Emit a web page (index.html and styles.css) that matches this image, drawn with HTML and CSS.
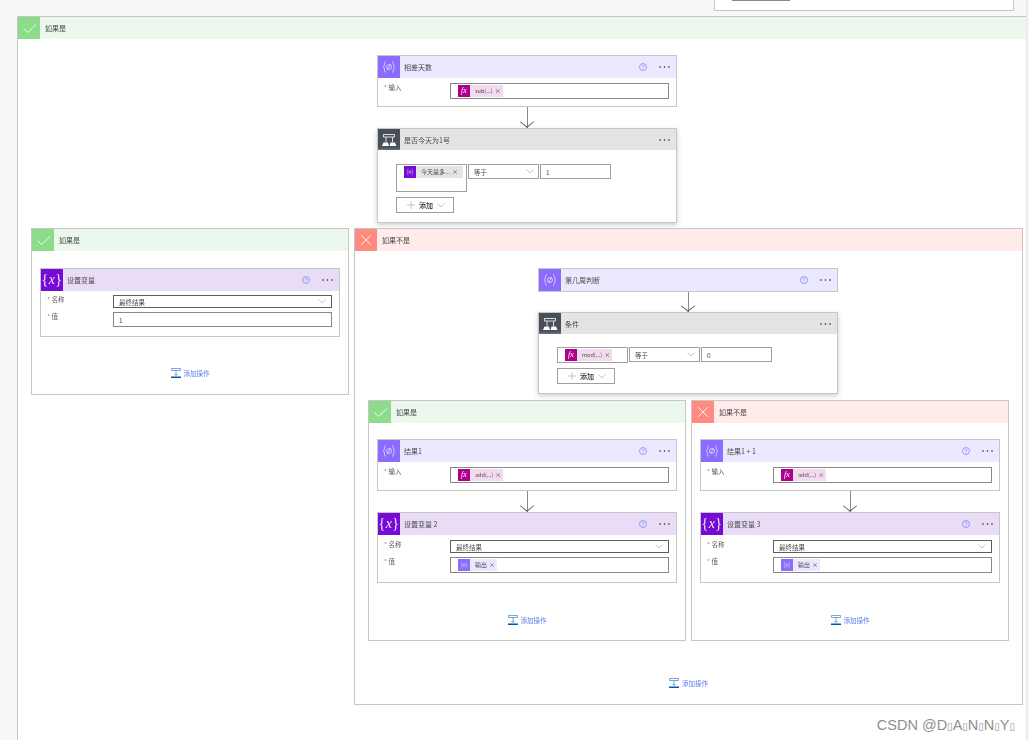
FILE: index.html
```html
<html lang="zh-CN">
<head>
    <meta charset="UTF-8">
    <title>Flow designer</title>
    <link rel="stylesheet" href="styles.css">
</head>
<body>
    <svg class="defs" width="0" height="0">
        <symbol id="i-check" viewBox="0 0 22 22"><path d="M5.500 11.500l4 4 8.500-8" fill="none" stroke="#fff" stroke-width="0.800"/></symbol>
        <symbol id="i-cross" viewBox="0 0 22 22"><path d="M6 6l10 10M16 6L6 16" fill="none" stroke="#fff" stroke-width="0.800"/></symbol>
        <symbol id="i-compose" viewBox="0 0 22 22"><g fill="none" stroke="#fff" stroke-width="0.600"><path d="M8 5.500c-2 0-1 4-2.500 5.500 1.500 1.500.5 5.500 2.500 5.500M14 5.500c2 0 1 4 2.500 5.500-1.500 1.500-.5 5.500-2.500 5.500"/><circle cx="11" cy="11" r="2.500"/><path d="M9.500 13.500l3-5"/></g></symbol>
        <symbol id="i-control" viewBox="0 0 22 22"><path d="M5.500 5.500h11v2.500h-11zM8 8v5M14.500 8v5" fill="none" stroke="#fff" stroke-width="0.800"/><path d="M4 17l1.500-3.500h4.500l1 3.500zM11.500 17l1-3.500h4.500l1.500 3.500z" fill="#fff"/></symbol>
        <symbol id="i-add" viewBox="0 0 10 10"><path d="M.5.500h9v2h-9zM5 2.500v5M3.500 6L5 7.500 6.500 6" fill="none" stroke="#5b8fc7" stroke-width="0.800"/><path d="M0 8.500h10V10H0z" fill="#0058a8"/></symbol>
        <symbol id="i-help" viewBox="0 0 8 8"><circle cx="4" cy="4" r="3.500" fill="none" stroke="#7f8ff0" stroke-width="0.800"/><path d="M3 3.200c0-1.300 2-1.300 2 0 0 .8-1 .8-1 1.600M4 5.600v.8" fill="none" stroke="#7f8ff0" stroke-width="0.700"/></symbol>
        <symbol id="i-dots" viewBox="0 0 11 2"><circle cx="1" cy="1" r="0.800" fill="#201f1e"/><circle cx="5.500" cy="1" r="0.800" fill="#201f1e"/><circle cx="10" cy="1" r="0.800" fill="#201f1e"/></symbol>
        <symbol id="i-chevron" viewBox="0 0 8 5"><path d="M.5.500L4 4 7.500.500" fill="none" stroke="#a19f9d" stroke-width="0.600"/></symbol>
        <symbol id="i-plus" viewBox="0 0 8 8"><path d="M4 0v8M0 4h8" fill="none" stroke="#9fbcd6" stroke-width="0.800"/></symbol>
    </svg>

    <div class="page">
        <div class="top-stub"><div class="stub-line"></div></div>

        <!-- Outer condition, yes branch -->
        <section class="scope scope-outer">
            <div class="scope-head head-yes">
                <span class="scope-icon icon-yes"><svg><use href="#i-check"/></svg></span>
                <span class="scope-title">如果是</span>
            </div>
            <div class="scope-body">
                <div class="stack stack-top">
                    <div class="card">
                        <div class="card-head head-compose">
                            <span class="card-icon icon-compose"><svg><use href="#i-compose"/></svg></span>
                            <span class="card-title">相差天数</span>
                            <svg class="help"><use href="#i-help"/></svg>
                            <svg class="dots"><use href="#i-dots"/></svg>
                        </div>
                        <div class="card-body">
                            <div class="field">
                                <label class="field-label"><b>*</b> 输入</label>
                                <div class="input"><span class="token token-fx"><i class="token-icon icon-fx">fx</i>sub(...)<em>×</em></span></div>
                            </div>
                        </div>
                    </div>
                    <div class="arrow"></div>
                    <div class="card card-control">
                        <div class="card-head head-control">
                            <span class="card-icon icon-control"><svg><use href="#i-control"/></svg></span>
                            <span class="card-title">是否今天为1号</span>
                            <svg class="dots"><use href="#i-dots"/></svg>
                        </div>
                        <div class="control-body">
                            <div class="rule">
                                <div class="rule-box rule-box-tall"><span class="token token-var"><i class="token-icon icon-var"><svg><use href="#i-compose"/></svg></i>今天是多...<em>×</em></span></div>
                                <div class="rule-box rule-select">等于<svg class="chevron"><use href="#i-chevron"/></svg></div>
                                <div class="rule-box">1</div>
                            </div>
                            <div class="add-btn"><svg class="plus"><use href="#i-plus"/></svg>添加<svg class="chevron"><use href="#i-chevron"/></svg></div>
                        </div>
                    </div>
                </div>

                <div class="branches">
                    <!-- Left branch -->
                    <section class="scope scope-side">
                        <div class="scope-head head-yes">
                            <span class="scope-icon icon-yes"><svg><use href="#i-check"/></svg></span>
                            <span class="scope-title">如果是</span>
                        </div>
                        <div class="stack stack-branch">
                            <div class="card">
                                <div class="card-head head-var">
                                    <span class="card-icon icon-var var-mark">{<i>x</i>}</span>
                                    <span class="card-title">设置变量</span>
                                    <svg class="help"><use href="#i-help"/></svg>
                                    <svg class="dots"><use href="#i-dots"/></svg>
                                </div>
                                <div class="card-body card-body-var">
                                    <div class="field">
                                        <label class="field-label"><b>*</b> 名称</label>
                                        <div class="select">最终结果<svg class="chevron"><use href="#i-chevron"/></svg></div>
                                    </div>
                                    <div class="field">
                                        <label class="field-label"><b>*</b> 值</label>
                                        <div class="input input-plain">1</div>
                                    </div>
                                </div>
                            </div>
                            <div class="add-action"><svg><use href="#i-add"/></svg>添加操作</div>
                        </div>
                    </section>

                    <!-- Right branch -->
                    <section class="scope scope-wide">
                        <div class="scope-head head-no">
                            <span class="scope-icon icon-no"><svg><use href="#i-cross"/></svg></span>
                            <span class="scope-title">如果不是</span>
                        </div>
                        <div class="stack stack-branch stack-wide">
                            <div class="card">
                                <div class="card-head head-compose">
                                    <span class="card-icon icon-compose"><svg><use href="#i-compose"/></svg></span>
                                    <span class="card-title">第几周判断</span>
                                    <svg class="help"><use href="#i-help"/></svg>
                                    <svg class="dots"><use href="#i-dots"/></svg>
                                </div>
                            </div>
                            <div class="arrow"></div>
                            <div class="card card-control">
                                <div class="card-head head-control">
                                    <span class="card-icon icon-control"><svg><use href="#i-control"/></svg></span>
                                    <span class="card-title">条件</span>
                                    <svg class="dots"><use href="#i-dots"/></svg>
                                </div>
                                <div class="control-body control-body-short">
                                    <div class="rule">
                                        <div class="rule-box"><span class="token token-fx"><i class="token-icon icon-fx">fx</i>mod(...)<em>×</em></span></div>
                                        <div class="rule-box rule-select">等于<svg class="chevron"><use href="#i-chevron"/></svg></div>
                                        <div class="rule-box">0</div>
                                    </div>
                                    <div class="add-btn"><svg class="plus"><use href="#i-plus"/></svg>添加<svg class="chevron"><use href="#i-chevron"/></svg></div>
                                </div>
                            </div>
                        </div>

                        <div class="sub-branches">
                            <section class="scope scope-side">
                                <div class="scope-head head-yes">
                                    <span class="scope-icon icon-yes"><svg><use href="#i-check"/></svg></span>
                                    <span class="scope-title">如果是</span>
                                </div>
                                <div class="stack stack-sub">
                                    <div class="card">
                                        <div class="card-head head-compose">
                                            <span class="card-icon icon-compose"><svg><use href="#i-compose"/></svg></span>
                                            <span class="card-title">结果1</span>
                                            <svg class="help"><use href="#i-help"/></svg>
                                            <svg class="dots"><use href="#i-dots"/></svg>
                                        </div>
                                        <div class="card-body">
                                            <div class="field">
                                                <label class="field-label"><b>*</b> 输入</label>
                                                <div class="input"><span class="token token-fx"><i class="token-icon icon-fx">fx</i>add(...)<em>×</em></span></div>
                                            </div>
                                        </div>
                                    </div>
                                    <div class="arrow"></div>
                                    <div class="card">
                                        <div class="card-head head-var">
                                            <span class="card-icon icon-var var-mark">{<i>x</i>}</span>
                                            <span class="card-title">设置变量 2</span>
                                            <svg class="help"><use href="#i-help"/></svg>
                                            <svg class="dots"><use href="#i-dots"/></svg>
                                        </div>
                                        <div class="card-body card-body-var">
                                            <div class="field">
                                                <label class="field-label"><b>*</b> 名称</label>
                                                <div class="select">最终结果<svg class="chevron"><use href="#i-chevron"/></svg></div>
                                            </div>
                                            <div class="field">
                                                <label class="field-label"><b>*</b> 值</label>
                                                <div class="input"><span class="token token-compose"><i class="token-icon icon-compose"><svg><use href="#i-compose"/></svg></i>输出<em>×</em></span></div>
                                            </div>
                                        </div>
                                    </div>
                                    <div class="add-action"><svg><use href="#i-add"/></svg>添加操作</div>
                                </div>
                            </section>

                            <section class="scope scope-side">
                                <div class="scope-head head-no">
                                    <span class="scope-icon icon-no"><svg><use href="#i-cross"/></svg></span>
                                    <span class="scope-title">如果不是</span>
                                </div>
                                <div class="stack stack-sub">
                                    <div class="card">
                                        <div class="card-head head-compose">
                                            <span class="card-icon icon-compose"><svg><use href="#i-compose"/></svg></span>
                                            <span class="card-title">结果1 + 1</span>
                                            <svg class="help"><use href="#i-help"/></svg>
                                            <svg class="dots"><use href="#i-dots"/></svg>
                                        </div>
                                        <div class="card-body">
                                            <div class="field">
                                                <label class="field-label"><b>*</b> 输入</label>
                                                <div class="input"><span class="token token-fx"><i class="token-icon icon-fx">fx</i>add(...)<em>×</em></span></div>
                                            </div>
                                        </div>
                                    </div>
                                    <div class="arrow"></div>
                                    <div class="card">
                                        <div class="card-head head-var">
                                            <span class="card-icon icon-var var-mark">{<i>x</i>}</span>
                                            <span class="card-title">设置变量 3</span>
                                            <svg class="help"><use href="#i-help"/></svg>
                                            <svg class="dots"><use href="#i-dots"/></svg>
                                        </div>
                                        <div class="card-body card-body-var">
                                            <div class="field">
                                                <label class="field-label"><b>*</b> 名称</label>
                                                <div class="select">最终结果<svg class="chevron"><use href="#i-chevron"/></svg></div>
                                            </div>
                                            <div class="field">
                                                <label class="field-label"><b>*</b> 值</label>
                                                <div class="input"><span class="token token-compose"><i class="token-icon icon-compose"><svg><use href="#i-compose"/></svg></i>输出<em>×</em></span></div>
                                            </div>
                                        </div>
                                    </div>
                                    <div class="add-action"><svg><use href="#i-add"/></svg>添加操作</div>
                                </div>
                            </section>
                        </div>

                        <div class="add-action add-action-wide"><svg><use href="#i-add"/></svg>添加操作</div>
                    </section>
                </div>
            </div>
        </section>
    </div>

    <div class="watermark">CSDN @D<span class="tofu">▯</span>A<span class="tofu">▯</span>N<span class="tofu">▯</span>N<span class="tofu">▯</span>Y<span class="tofu">▯</span></div>
</body>
</html>
```

FILE: styles.css
```css
* {
    box-sizing: border-box;
}
html, body {
    margin: 0;
    height: 740px;
    overflow: hidden;
}
body {
    position: relative;
    background-color: #f8f8f8;
    font-family: "Noto Sans CJK SC", "Liberation Sans", sans-serif;
    font-size: 7px;
    color: #4a4a4a;
}
.defs {
    position: absolute;
}
.page {
    width: 1026px;
    height: 740px;
    padding-left: 17px;
    filter: blur(0.25px); /* the reference is a scaled down capture */
}

/* Bottom of the card above the fold */
.top-stub {
    width: 300px;
    height: 11px;
    margin-left: 697px;
    margin-bottom: 5px;
    padding-left: 17px;
    background: #fff;
    border: 1px solid #c8c6c4;
    border-top: none;
}
.stub-line {
    width: 58px;
    height: 1px;
    background: #8a8886;
}

/* Scopes */
.scope {
    background: #fff;
    border: 1px solid #c8c6c4;
}
.scope-outer {
    height: 724px;
    border-right: none;
    border-bottom: none;
}
.scope-side {
    width: 318px;
}
.scope-wide {
    width: 669px;
}
.scope-head {
    display: flex;
    align-items: center;
    height: 22px;
}
.scope-icon, .card-icon {
    display: flex;
    align-items: center;
    justify-content: center;
    flex: none;
    width: 22px;
    height: 22px;
}
.scope-icon svg, .card-icon svg {
    width: 22px;
    height: 22px;
}
.scope-title, .card-title {
    margin-left: 5px;
    line-height: 22px;
}
.head-yes { background: #ecf7ee; }
.head-no { background: #ffecea; }
.icon-yes { background: #8ddc8c; }
.icon-no { background: #ff8a80; }
.head-compose { background: #ece8ff; }
.head-var { background: #e9dcf6; }
.head-control { background: #e3e4e5; }
.icon-compose { background: #8c6cff; }
.icon-var { background: #770bd6; }
.icon-control { background: linear-gradient(#484f58 85%, #6a7078); }

.stack {
    display: flex;
    flex-direction: column;
    align-items: center;
    padding-top: 16px;
}
.stack-top {
    padding-left: 10px;
}
.stack-branch {
    padding-top: 17px;
}
.stack-wide {
    padding-right: 1px;
}
.stack-wide .arrow {
    height: 20px;
}
.add-action {
    display: flex;
    align-items: center;
    justify-content: center;
    gap: 3px;
    height: 10px;
    margin-top: 31px;
    margin-bottom: 16px;
    font-size: 6.500px;
    color: #5a78ee;
}
.add-action svg {
    width: 10px;
    height: 10px;
}
.stack-sub .add-action {
    margin-top: 32px;
    margin-bottom: 15px;
}
.add-action-wide {
    margin-top: 37px;
    margin-bottom: 16px;
}
.branches {
    display: flex;
    align-items: flex-start;
    gap: 5px;
    margin-top: 5px;
    padding-left: 13px;
}
.sub-branches {
    display: flex;
    gap: 5px;
    margin-top: 6px;
    padding-left: 13px;
}

/* Action cards */
.card {
    width: 300px;
    background: #fff;
    border: 1px solid #c8c6c4;
}
.card-control {
    box-shadow: 0 2px 5px rgba(0, 0, 0, 0.2);
}
.card-control .card-head {
    height: 21px;
}
.card-control .card-icon {
    height: 21px;
}
.card-head {
    display: flex;
    align-items: center;
    height: 22px;
    padding-right: 6px;
}
.card-title {
    flex: 1;
    margin-left: 4px;
}
.var-mark {
    color: #f3e9fb;
    font-family: "Liberation Serif", serif;
    font-size: 14px;
    letter-spacing: 0.5px;
}
.help {
    width: 8px;
    height: 8px;
    margin-right: 12px;
}
.dots {
    width: 11px;
    height: 2px;
}
.card-body {
    padding: 5px 7px 7px 6px;
}
.card-body-var {
    display: flex;
    flex-direction: column;
    gap: 4px;
    padding-top: 4px;
    padding-bottom: 9px;
}
.stack-sub .card-body-var {
    padding-top: 5px;
}
.field {
    display: grid;
    grid-template-columns: 66px 1fr;
}
.field-label {
    font-size: 6.500px;
    line-height: 9px;
    color: #605e5c;
}
.field-label b {
    color: #e0616f;
    font-weight: normal;
}
.input, .select {
    display: flex;
    align-items: center;
    background: #fff;
    font-size: 6.500px;
}
.input {
    height: 16px;
    padding-left: 7px;
    border: 1px solid #8a8886;
}
.input-plain {
    height: 15px;
    padding-left: 5px;
}
.select {
    justify-content: space-between;
    height: 13px;
    padding: 0 5px 0 5px;
    border: 1px solid #605e5c;
}
.chevron {
    width: 8px;
    height: 5px;
}

/* Tokens */
.token {
    display: inline-flex;
    align-items: center;
    gap: 5px;
    height: 12px;
    padding-right: 2px;
    font-size: 6px;
    line-height: 12px;
}
.token em {
    margin-left: -3px;
    font-style: normal;
    font-size: 6px;
}
.token-icon {
    display: flex;
    align-items: center;
    justify-content: center;
    width: 12px;
    height: 12px;
}
.token-icon svg {
    width: 12px;
    height: 12px;
}
.icon-fx {
    background: #ad008c;
    color: #fff;
    font-family: "Liberation Serif", serif;
    font-size: 8px;
}
.token-fx {
    background: #f3dbef;
    font-size: 5.500px;
}
.token-var {
    padding-right: 5px;
    background: #e3e4e5;
}
.token-compose { background: #ece8ff; }

/* Condition body */
.control-body {
    padding: 14px 0 9px 18px;
}
.control-body-short {
    padding-top: 13px;
}
.rule {
    display: flex;
    align-items: flex-start;
    gap: 1px;
}
.rule-box {
    display: flex;
    align-items: center;
    width: 71px;
    height: 15px;
    padding-left: 5px;
    border: 1px solid #a19f9d;
    font-size: 6.500px;
}
.rule-box:first-child {
    height: 16px;
    padding-left: 7px;
}
.rule-box-tall, .rule-box-tall:first-child {
    align-items: flex-start;
    height: 28px;
    padding-top: 1px;
}
.rule-select {
    justify-content: space-between;
    padding-right: 4px;
}
.add-btn {
    display: flex;
    align-items: center;
    width: 58px;
    height: 16px;
    margin-top: 5px;
    padding-left: 10px;
    gap: 4px;
    border: 1px solid #a19f9d;
    font-size: 7px;
    font-weight: 500;
    color: #333;
}
.plus {
    width: 8px;
    height: 8px;
}

/* Arrow between cards */
.arrow {
    position: relative;
    width: 1px;
    height: 21px;
    border-left: 1.500px solid #8a8886;
}
.arrow::after {
    content: "";
    position: absolute;
    left: -5.500px;
    bottom: 1px;
    width: 9px;
    height: 9px;
    border-right: 1px solid #605e5c;
    border-bottom: 1px solid #605e5c;
    transform: scaleY(0.8) rotate(45deg);
}

/* Overlays */
.watermark {
    position: absolute;
    right: 14px;
    bottom: 7px;
    font-family: "Liberation Sans", sans-serif;
    font-size: 14.500px;
    color: #8f8f8f;
}
.tofu {
    font-family: "DejaVu Sans", sans-serif;
    font-size: 10px;
}
body::after {
    content: "";
    position: absolute;
    top: 0;
    right: 0;
    width: 3px;
    height: 740px;
    background: linear-gradient(to right, #e6e6e6, #fbfbfb);
}
```
